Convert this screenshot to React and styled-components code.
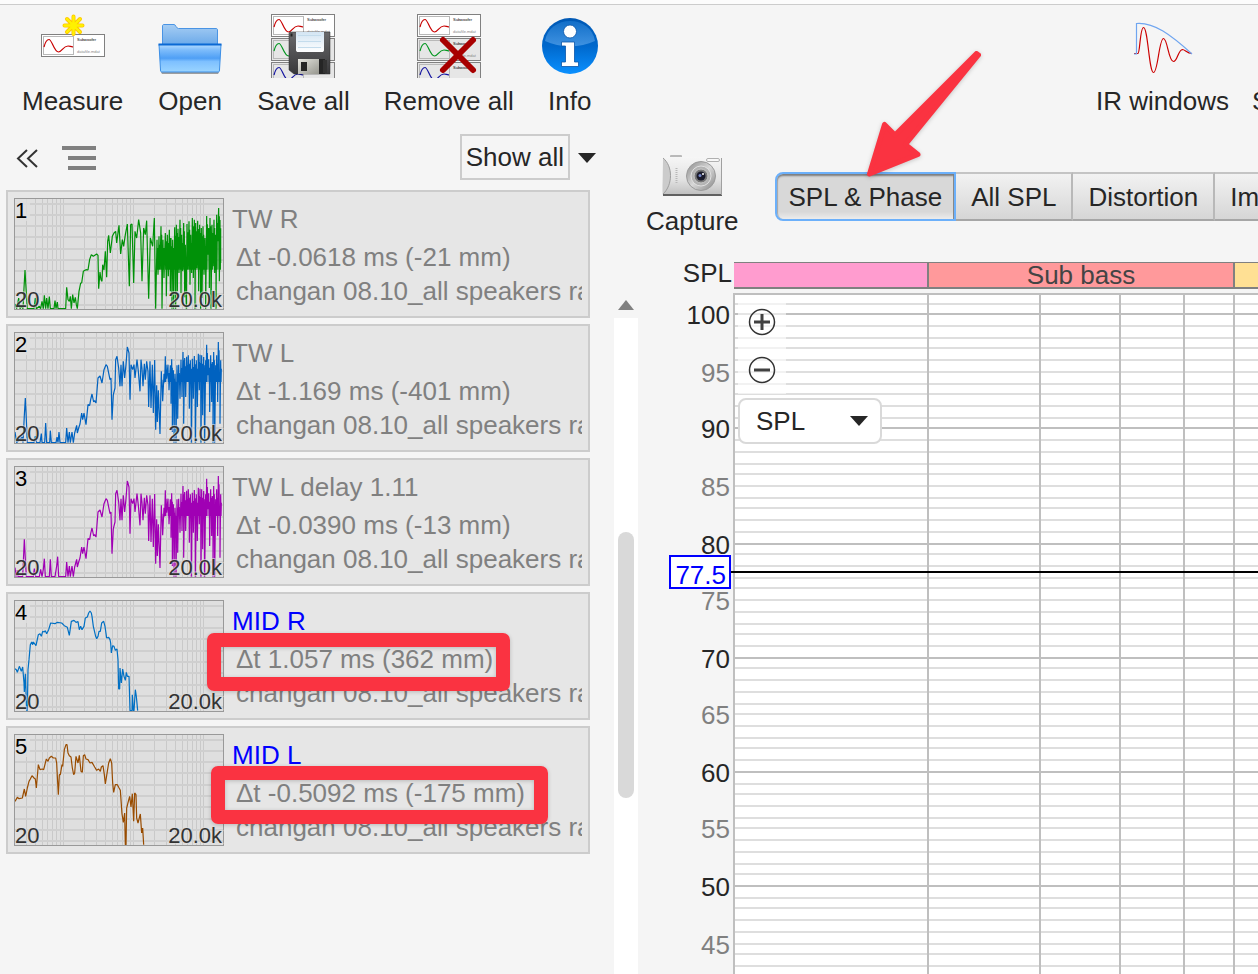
import React from "react"
import styled, { createGlobalStyle } from "styled-components"

const GlobalStyle = createGlobalStyle`
  * {
    box-sizing: border-box;
  }
  body {
    margin: 0;
    background: #f5f5f5;
    color: #262626;
    font-family: "Liberation Sans", Arial, sans-serif;
    font-size: 26px;
    line-height: 30px;
  }
  button, select {
    font: inherit;
    color: inherit;
    margin: 0;
    cursor: pointer;
  }
  svg {
    display: block;
  }
`

const Page = styled.div`
  display: flex;
  flex-direction: column;
  height: 100vh;
  overflow: hidden;
`

const TitleStrip = styled.div`
  flex: none;
  height: 5px;
  background: #fcfcfc;
  border-bottom: 1px solid #cccccc;
`

const Toolbar = styled.header`
  flex: none;
  display: flex;
  justify-content: space-between;
  padding: 9px 0 0 16px;
`

const ToolGroup = styled.div`
  display: flex;
  gap: 23px;
`

const MeasurementTools = styled(ToolGroup)`
  width: 168px;
  gap: 11px;
  overflow: hidden;
`

const ToolButton = styled.button`
  flex: none;
  display: flex;
  flex-direction: column;
  align-items: center;
  gap: 8px;
  padding: 0 ${props => props.$pad}px;
  border: 0;
  background: none;
  white-space: nowrap;
`

const Workspace = styled.div`
  flex: 1;
  min-height: 0;
  display: flex;
`

const Sidebar = styled.aside`
  flex: none;
  display: flex;
  width: 638px;
`

const ListColumn = styled.div`
  flex: 1;
  min-width: 0;
  padding: 18px 24px 0 6px;
`

const ListControls = styled.div`
  display: flex;
  align-items: center;
  height: 46px;
  margin: 0 -14px 10px 0;
`

const IconButton = styled.button`
  display: flex;
  padding: 2px ${props => props.$pad}px 0;
  border: 0;
  background: none;
`

const ShowAll = styled.button`
  height: 46px;
  margin-left: auto;
  padding: 0 4px;
  border: 2px solid #cccccc;
  background: #f5f5f5;
`

const List = styled.ul`
  display: flex;
  flex-direction: column;
  gap: 6px;
  margin: 0;
  padding: 0;
  list-style: none;
`

const Card = styled.li`
  position: relative;
  display: flex;
  gap: 8px;
  height: 128px;
  padding: 6px;
  border: 2px solid #cccccc;
  background: #e6e6e6;
  color: #808080;
`

const ThumbnailSvg = styled.svg`
  flex: none;
`

const CardText = styled.div`
  flex: 1;
  min-width: 0;
  padding-top: 6px;
  overflow: hidden;
  white-space: nowrap;
`

const CardTitle = styled.div`
  color: ${props => (props.$active ? "#0000ff" : "#808080")};
`

const CardDelay = styled.div`
  margin-top: 8px;
  padding-left: 4px;
`

const CardFile = styled.div`
  margin-top: 4px;
  padding-left: 4px;
`

const Marker = styled.div`
  position: absolute;
  left: ${props => props.$box.left}px;
  top: ${props => props.$box.top}px;
  width: ${props => props.$box.width}px;
  height: 58px;
  border: 14px solid #fa3341;
  border-radius: 7px;
  box-shadow: 0 1px 4px rgba(0, 0, 0, 0.2), inset 0 1px 4px rgba(0, 0, 0, 0.2);
  pointer-events: none;
`

const ScrollBar = styled.div`
  flex: none;
  display: flex;
  flex-direction: column;
  align-items: center;
  width: 24px;
  padding-top: 184px;
`

const ScrollTrack = styled.div`
  flex: 1;
  width: 24px;
  margin-top: 8px;
  padding: 214px 4px 0;
  background: #ffffff;
`

const ScrollThumb = styled.div`
  height: 266px;
  border-radius: 8px;
  background: #d9d9d9;
`

const GraphPane = styled.main`
  flex: 1;
  min-width: 0;
  display: flex;
  flex-direction: column;
`

const GraphHeader = styled.div`
  display: flex;
  gap: 30px;
  padding: 38px 0 0 2px;
`

const TabArea = styled.div`
  position: relative;
  flex: 1;
  min-width: 0;
  padding-top: 18px;
`

const Tabs = styled.div`
  display: flex;
  overflow: hidden;
`

const Tab = styled.button`
  flex: none;
  height: 49px;
  padding: 0 15px;
  border: 0;
  border-top: 2px solid #c4c4c4;
  border-bottom: 2px solid #a6a6a6;
  border-right: 2px solid #b8b8b8;
  background: linear-gradient(#f2f2f2, #d6d6d6);
  white-space: nowrap;

  &[aria-selected="true"] {
    padding: 0 12px;
    border: 2px solid #6cb0fa;
    border-radius: 8px 0 0 8px;
    background: linear-gradient(#d8d8d8 84%, #ececec);
    box-shadow: inset 0 3px 2px -1px #7d7d7d, inset 2px 0 1px -1px #aaaaaa,
      inset -1px 0 0 #8a8a8a;
  }
`

const Arrow = styled.svg`
  position: absolute;
  left: 85px;
  top: -109px;
  filter: drop-shadow(0 1px 2px rgba(0, 0, 0, 0.2));
  pointer-events: none;
`

const BandRow = styled.div`
  flex: none;
  display: flex;
  margin-top: 22px;
`

const AxisTitle = styled.div`
  width: 96px;
  padding-right: 2px;
  text-align: right;
`

const Bands = styled.div`
  flex: 1;
  min-width: 0;
  display: flex;
  height: 27px;
  margin-top: 4px;
  border-top: 1px solid #808080;
  border-bottom: 2px solid #808080;
`

const Band = styled.div`
  flex: ${props => (props.$width ? "none" : 1)};
  display: flex;
  align-items: center;
  justify-content: center;
  width: ${props => props.$width}px;
  border-right: 2px solid #808080;
  background: ${props => props.$color};
  color: #444444;

  &:last-child {
    border-right: 0;
  }
`

const Graph = styled.div`
  position: relative;
  flex: 1;
  min-height: 0;
  overflow: hidden;
`

const GraphControls = styled.div`
  position: absolute;
  left: 100px;
  top: 9px;
`

const ZoomButton = styled.button`
  display: flex;
  align-items: center;
  justify-content: center;
  width: 48px;
  height: 48px;
  padding: 0;
  border: 0;
  background: rgba(255, 255, 255, 0.6);
`

const SelectBox = styled.label`
  display: flex;
  align-items: center;
  margin-top: 4px;
  width: 144px;
  height: 46px;
  padding-right: 12px;
  border: 2px solid #d9d9d9;
  border-radius: 8px;
  background: #ffffff;

  select {
    flex: 1;
    min-width: 0;
    appearance: none;
    padding: 0 0 0 16px;
    border: 0;
    outline: 0;
    background: none;
  }
`

const WaveCard = ({ y, color, fill = "#fff" }) => (
  <g transform={`translate(0 ${y})`}>
    <rect x="0.5" y="0.5" width="63" height="22" fill={fill} stroke="#808080" />
    <rect x="2.5" y="2.5" width="30" height="18" fill={fill} stroke="#b8b8b8" />
    <path
      d="M3 13C4 9 6 5.500 8 5.500C11 5.500 13 18 17.500 18C21 18 22 12 27 12C29 12 30 13 32 12.800"
      fill="none"
      stroke={color}
      strokeWidth="1.2"
    />
    <text x="36" y="7" fontSize="4" fill="#000">
      Subwoofer
    </text>
    <text x="36" y="19" fontSize="4" fill="#888">
      datafile.mdat
    </text>
  </g>
)

const WaveStack = () => (
  <g>
    <WaveCard y={0} color="#c80000" />
    <WaveCard y={24} color="#00961e" fill="#e6e6e6" />
    <WaveCard y={48} color="#1414a0" fill="#e6e6e6" />
  </g>
)

const MeasureIcon = () => (
  <svg width="64" height="64" viewBox="0 0 64 64">
    <WaveCard y={20} color="#c80000" />
    <g strokeLinecap="round">
      <path
        d="M32.500 2.500V20M23.500 11.500H41.500M26 5L39 18M39 5L26 18"
        stroke="#ffc400"
        strokeWidth="4"
      />
      <path
        d="M32.500 2.500V20M23.500 11.500H41.500M26 5L39 18M39 5L26 18"
        stroke="#fff200"
        strokeWidth="2.4"
      />
    </g>
  </svg>
)

const OpenIcon = () => (
  <svg width="64" height="64" viewBox="0 0 64 64">
    <defs>
      <linearGradient id="folderBack" x1="0" y1="0" x2="0" y2="1">
        <stop offset="0" stopColor="#a6cdf3" />
        <stop offset="1" stopColor="#62a4e8" />
      </linearGradient>
      <linearGradient id="folderFront" x1="0" y1="0" x2="0" y2="1">
        <stop offset="0" stopColor="#b4dcff" />
        <stop offset="0.2" stopColor="#7dbcfb" />
        <stop offset="0.5" stopColor="#4f9ff5" />
        <stop offset="0.62" stopColor="#7ec0ff" />
        <stop offset="1" stopColor="#9ad4ff" />
      </linearGradient>
    </defs>
    <path d="M3 58H61L60 60H4Z" fill="#777" opacity="0.7" />
    <path
      d="M4.500 34V12C4.500 11 5 10.500 6 10.500H16C18 10.500 18 14.500 20.500 14.500H58C59 14.500 59.500 15 59.500 16V34Z"
      fill="url(#folderBack)"
      stroke="#4a94e4"
    />
    <path
      d="M1 30.500H63L61.500 56C61.500 57.500 61 58 60 58H4C3 58 2.500 57.500 2.500 56Z"
      fill="url(#folderFront)"
      stroke="#3c8fe6"
    />
    <path d="M0.500 30.500H63.500" stroke="#0b69d4" strokeWidth="2" />
  </svg>
)

const SaveIcon = () => (
  <svg width="64" height="64" viewBox="0 0 64 64">
    <defs>
      <linearGradient id="diskBody" x1="0" y1="0" x2="0" y2="1">
        <stop offset="0" stopColor="#6a6a6c" />
        <stop offset="1" stopColor="#38383a" />
      </linearGradient>
      <linearGradient id="diskLabel" x1="0" y1="0" x2="0" y2="1">
        <stop offset="0" stopColor="#d3e5f3" />
        <stop offset="1" stopColor="#ffffff" />
      </linearGradient>
      <linearGradient id="diskShutter" x1="0" y1="0" x2="1" y2="1">
        <stop offset="0" stopColor="#e6e6e0" />
        <stop offset="1" stopColor="#96968e" />
      </linearGradient>
    </defs>
    <WaveStack />
    <path d="M19 18H59V60H23L18 56V19Z" fill="url(#diskBody)" stroke="#2b2b2b" strokeWidth="0.5" />
    <rect x="19.500" y="19.500" width="2" height="3" fill="#222" />
    <path d="M25 18H53V36C53 37.500 52 38 51 38H27C26 38 25 37.500 25 36Z" fill="url(#diskLabel)" />
    <path d="M27 21.500H50M27 27.500H50M27 33.500H50" stroke="#c4dcec" />
    <rect x="27" y="45" width="27" height="15" fill="#252525" />
    <rect x="27" y="45" width="21" height="15" fill="url(#diskShutter)" />
    <rect x="30" y="48" width="6" height="9" fill="#252525" />
    <rect x="52" y="46" width="4" height="13" fill="#333" />
  </svg>
)

const RemoveIcon = () => (
  <svg width="64" height="64" viewBox="0 0 64 64">
    <WaveStack />
    <path
      d="M26 26L56 56M56 26L26 56"
      stroke="#a80000"
      strokeWidth="6"
      strokeLinecap="round"
    />
  </svg>
)

const InfoIcon = () => (
  <svg width="56" height="64" viewBox="0 0 56 64">
    <defs>
      <linearGradient id="infoBall" x1="0" y1="0" x2="0" y2="1">
        <stop offset="0" stopColor="#0058b4" />
        <stop offset="0.5" stopColor="#0068cc" />
        <stop offset="1" stopColor="#0a90ff" />
      </linearGradient>
      <linearGradient id="infoGloss" x1="0" y1="0" x2="0" y2="1">
        <stop offset="0" stopColor="#1b78d0" />
        <stop offset="1" stopColor="#5aa4ea" />
      </linearGradient>
    </defs>
    <circle cx="28" cy="32" r="28" fill="url(#infoBall)" />
    <path d="M3 27C5 14 16 7 28 7S51 14 53 27C38 34 18 34 3 27Z" fill="url(#infoGloss)" opacity="0.7" />
    <g fill="#fff" stroke="#0a55a8" strokeWidth="0.8">
      <circle cx="28" cy="17.500" r="6.500" />
      <path d="M19.500 28H32.500V48H36.500V52.500H19.500V48H23.500V32H19.500Z" />
    </g>
  </svg>
)

const IrIcon = () => (
  <svg width="64" height="64" viewBox="0 0 64 64">
    <path
      d="M4 39.500H8C10 39 10 13.500 13.500 13.500C18 13.500 19 58.500 23.500 58.500C28 58.500 29 24.500 33.500 24.500C37.500 24.500 38.500 47.500 43.500 47.500C47.500 47.500 48 36 52.500 35.500C55 35.500 57 39.500 62 39.500"
      fill="none"
      stroke="#cc0000"
      strokeWidth="1.2"
    />
    <path
      d="M4 40H6.500V9.500C24 8 41 21 62 40"
      fill="none"
      stroke="#6fa5f0"
      strokeWidth="1.2"
    />
  </svg>
)

const CameraIcon = () => (
  <svg width="60" height="44" viewBox="0 0 60 44">
    <defs>
      <linearGradient id="camBody" x1="0" y1="0" x2="0" y2="1">
        <stop offset="0" stopColor="#f6f6f6" />
        <stop offset="0.6" stopColor="#e2e2e2" />
        <stop offset="1" stopColor="#bebebe" />
      </linearGradient>
      <linearGradient id="camRing" x1="0" y1="0" x2="1" y2="1">
        <stop offset="0" stopColor="#8a8a8a" />
        <stop offset="0.5" stopColor="#d8d8d8" />
        <stop offset="1" stopColor="#858585" />
      </linearGradient>
    </defs>
    <rect x="8" y="1" width="12" height="3" rx="1" fill="#b9b9b9" />
    <path d="M1 3H60V41H1C0 40 0 4 1 3Z" fill="url(#camBody)" />
    <path d="M1 4C11 12 11 31 1 40Z" fill="#cbcbcb" />
    <path d="M1 4C11 12 11 31 1 40" fill="none" stroke="#9c9c9c" />
    <path d="M1 41H60" stroke="#606060" strokeWidth="2" />
    <path d="M59.500 4V41" stroke="#a0a0a0" />
    <rect x="44.500" y="4.500" width="13" height="3" rx="1.5" fill="#f8f8f8" stroke="#b0b0b0" />
    <path d="M14.500 14V30" stroke="#b8b8b8" strokeWidth="2" strokeDasharray="1 1" />
    <circle cx="39" cy="22" r="14.500" fill="url(#camRing)" stroke="#9b9b9b" />
    <circle cx="39" cy="22" r="10" fill="#b3b3b3" stroke="#e0e0e0" />
    <circle cx="39" cy="22" r="7" fill="#777" stroke="#c8c8c8" />
    <circle cx="39" cy="22" r="4.500" fill="#1b1c2c" />
    <circle cx="38" cy="21.500" r="1.500" fill="#7788cc" />
    <circle cx="41" cy="20" r="1" fill="#fff" />
  </svg>
)

const DownTriangle = () => (
  <svg width="18" height="10" viewBox="0 0 18 10">
    <path d="M0 0H18L9 10Z" fill="#262626" />
  </svg>
)

// Frequency responses, traced on a 630 x 336 grid (20 Hz to 20 kHz)
const twRight =
  "3,318 8,332 14,300 18,332 23,325 27,332 30,270 33,216 36,270 40,332 60,332 64,300 67,332 76,325 80,332 84,310 88,332 91,292 95,332 98,300 102,332 106,296 109,332 120,332 123,308 126,332 130,312 132,332 155,332 158,268 162,305 166,310 169,295 172,332 176,290 180,315 184,298 187,320 190,332 195,280 200,255 203,255 208,220 216,215 222,216 227,184 232,170 238,175 248,168 252,172 254,272 258,222 261,245 264,250 266,200 270,216 274,160 278,238 281,130 284,112 289,165 295,115 300,105 305,100 308,135 315,82 320,168 325,125 329,145 334,110 340,78 346,265 350,80 354,78 359,255 363,100 368,120 374,65 380,105 384,250 389,90 394,110 398,68 404,302 409,120 416,145 421,60 425,332 429,125 432,230 435,115 438,215 441,85 444,332 447,125 450,240 454,105 457,295 460,110 463,235 466,95 469,280 471,120 474,332 476,125 479,332 482,88 485,332 487,80 490,280 492,92 495,225 498,65 501,285 503,110 506,220 509,75 512,298 514,140 517,332 519,78 522,215 525,70 528,260 530,110 533,225 535,60 538,240 541,65 543,332 545,75 548,210 551,68 554,280 557,80 560,332 562,90 564,300 567,85 570,230 573,120 575,332 578,54 581,170 584,90 586,270 588,60 591,332 594,80 597,205 600,65 602,225 604,110 606,332 608,50 611,130 614,30 616,250 618,66 620,195"

const twLeft =
  "155,332 158,288 162,332 166,300 169,332 174,300 178,332 182,303 188,280 190,303 194,288 198,276 203,243 206,263 210,243 216,278 222,218 227,220 230,203 234,186 239,210 242,206 246,213 252,138 258,132 264,153 270,113 276,98 280,103 288,143 291,138 294,263 298,188 303,168 305,83 309,73 314,108 318,163 321,98 324,163 328,88 332,138 336,98 340,45 345,63 348,203 351,98 356,113 360,98 363,138 369,83 373,118 378,178 381,83 384,110 387,163 391,95 394,143 398,88 402,118 404,225 408,88 411,228 415,98 418,243 422,84 425,293 428,160 430,270 433,175 438,306 442,118 446,208 450,125 454,73 458,140 462,98 465,175 469,100 471,215 473,82 475,300 478,115 480,332 483,125 486,332 489,100 491,260 494,98 498,200 501,83 504,195 507,60 509,275 512,78 515,195 518,74 521,150 523,70 526,230 529,85 532,332 535,80 538,200 541,72 544,332 547,85 550,225 553,65 556,175 558,68 561,332 563,70 566,250 569,75 572,332 575,85 578,38 581,130 584,82 587,240 590,70 593,210 595,90 597,332 599,60 602,332 605,100 608,70 611,210 613,30 616,120 618,275 620,85"

const floorA = "3,300 8,332 24,315 27,332 31,250 34,198 36,240 40,332 60,332 64,312 68,332 78,332 82,305 84,332 92,332 95,273 98,332 107,332 109,296 112,332 126,332 129,315 132,332 135,300 138,332 "
const floorB = "3,305 6,332 10,312 12,332 26,332 31,220 34,280 37,332 58,332 61,308 65,332 76,332 80,310 84,332 88,310 91,278 94,332 106,332 109,280 112,332 123,332 128,300 131,272 134,332 "

const midRight =
  "3,206 7,209 10,217 16,199 22,214 26,201 30,249 31,276 34,221 37,309 38,331 40,331 42,209 45,179 49,134 53,126 56,134 58,126 66,137 73,104 78,101 82,109 86,94 91,96 94,92 98,101 104,89 110,69 123,71 130,67 143,69 151,77 160,82 166,106 172,64 180,61 186,67 192,65 196,89 200,79 204,89 210,79 214,54 220,51 224,39 228,33 232,39 234,49 238,79 245,109 248,116 252,109 255,94 259,94 263,69 269,64 273,79 278,114 284,112 288,119 290,129 292,159 296,137 300,139 304,151 309,147 312,179 314,267 317,267 318,204 322,249 326,207 330,229 334,241 337,217 340,229 345,229 348,332 354,332 355,284 358,332 360,332 364,269 367,289 371,332"

const midLeft =
  "3,202 10,190 15,194 25,192 31,165 35,187 40,162 45,142 49,135 54,125 60,132 64,135 67,162 73,92 78,107 85,105 89,107 97,75 102,82 106,72 112,67 118,72 125,72 128,87 130,127 133,182 136,122 139,122 144,92 146,97 151,47 156,32 159,32 162,57 166,65 171,69 175,102 179,122 182,117 186,67 192,87 196,64 201,112 205,115 208,65 212,62 216,75 222,77 228,87 234,85 242,99 248,109 254,105 259,112 262,99 267,95 271,122 274,150 280,112 284,87 289,74 293,87 296,147 299,175 304,152 310,152 314,160 319,169 324,240 328,265 332,237 334,332 336,332 338,222 343,202 347,187 351,219 355,179 359,262 362,177 366,182 368,252 372,267 379,240 383,297 386,282 389,332"

// the tweeter traces comb heavily above 2 kHz, so every peak there gets a second dip
const addCombing = (points, depth) =>
  points
    .split(" ")
    .map(point => {
      const [x, y] = point.split(",").map(Number)
      return x > 425 && y < 130 ? `${point} ${x + 1},${depth} ${x + 2},${y + 25}` : point
    })
    .join(" ")

const measurements = [
  { name: "TW R", delay: "Δt -0.0618 ms (-21 mm)", color: "#009108", points: addCombing(twRight, 215) },
  { name: "TW L", delay: "Δt -1.169 ms (-401 mm)", color: "#0062c0", points: floorA + addCombing(twLeft, 150) },
  { name: "TW L delay 1.11", delay: "Δt -0.0390 ms (-13 mm)", color: "#a000b4", points: floorB + addCombing(twLeft, 150) },
  {
    name: "MID R",
    delay: "Δt 1.057 ms (362 mm)",
    color: "#0070c4",
    points: midRight,
    active: true,
    marker: { left: 199, top: 39, width: 303 }
  },
  {
    name: "MID L",
    delay: "Δt -0.5092 ms (-175 mm)",
    color: "#994c00",
    points: midLeft,
    active: true,
    marker: { left: 203, top: 38, width: 337 }
  }
]

const gridFreqs = [10, 100, 1000, 10000]
  .flatMap(decade => [1, 2, 3, 4, 5, 6, 7, 8, 9].map(n => n * decade))
  .filter(f => f > 20 && f < 20000)
const freqToX = f => Math.round(Math.log10(f / 20) * 70)
const gridRows = [6, 17, 28, 39, 51, 62, 73, 85, 96, 107]

const Thumbnail = ({ index, color, points }) => (
  <ThumbnailSvg width="210" height="112" viewBox="0 0 210 112">
    <rect width="210" height="112" fill="#dfdfdf" />
    <g stroke="#c9c9c9">
      {gridFreqs.map(f => (
        <line key={f} x1={freqToX(f) + 0.5} x2={freqToX(f) + 0.5} y1="1" y2="111" />
      ))}
      {gridRows.map(y => (
        <line key={y} x1="1" x2="209" y1={y} y2={y} strokeWidth="2" stroke="#cfcfcf" />
      ))}
    </g>
    <rect x="1" y="1" width="15" height="22" fill="#dfdfdf" opacity="0.8" />
    <g transform="scale(0.33333)">
      <polyline points={points} fill="none" stroke={color} strokeWidth="3.6" strokeLinejoin="bevel" />
    </g>
    <rect x="0.5" y="0.5" width="209" height="111" fill="none" stroke="#999999" />
    <g fontSize="22" fill="#333" stroke="#dfdfdf" strokeOpacity="0.6" strokeWidth="2" paintOrder="stroke">
      <text x="1" y="20" fill="#000">{index}</text>
      <text x="1" y="109">20</text>
      <text x="208" y="109" textAnchor="end">20.0k</text>
    </g>
  </ThumbnailSvg>
)

const MeasurementCard = ({ index, item }) => (
  <Card>
    <Thumbnail index={index} color={item.color} points={item.points} />
    <CardText>
      <CardTitle $active={item.active}>{item.name}</CardTitle>
      <CardDelay>{item.delay}</CardDelay>
      <CardFile>changan 08.10_all speakers raw</CardFile>
    </CardText>
    {item.marker && <Marker $box={item.marker} />}
  </Card>
)

// the plot starts 289px down the window and snaps to a 2px raster
const dbToY = db => 2 * Math.round(157.3 + (100 - db) * 5.715) - 289
const levels = Array.from({ length: 59 }, (_, i) => 101 - i)
const freqLines = [290, 402, 482, 546, 596]

const SplGraph = () => (
  <svg width="100%" height="100%">
    <rect x="96" y="5" width="100%" height="100%" fill="#fff" />
    {levels.map(db => (
      <line
        key={db}
        x1="96"
        x2="100%"
        y1={dbToY(db)}
        y2={dbToY(db)}
        stroke={db % 10 ? "#dedede" : "#bfbfbf"}
        strokeWidth="2"
      />
    ))}
    {freqLines.map(x => (
      <line key={x} x1={x} x2={x} y1="5" y2="100%" stroke="#bfbfbf" strokeWidth="2" />
    ))}
    <line x1="96" x2="96" y1="4" y2="100%" stroke="#bfbfbf" strokeWidth="2" />
    <line x1="95" x2="100%" y1="5" y2="5" stroke="#bfbfbf" strokeWidth="2" />
    {levels.filter(db => db % 5 === 0).map(db => (
      <text
        key={db}
        x="92"
        y={dbToY(db) + 10}
        fontSize="26"
        textAnchor="end"
        fill={db % 10 ? "#808080" : "#262626"}
      >
        {db}
      </text>
    ))}
    <line x1="92" x2="100%" y1="283" y2="283" stroke="#000" strokeWidth="2" />
    <rect x="32" y="267" width="60" height="32" fill="#fff" stroke="#0000ff" strokeWidth="2" />
    <text x="88" y="295" fontSize="26" textAnchor="end" fill="#0000ff">
      77.5
    </text>
  </svg>
)

const ZoomIcon = ({ plus }) => (
  <svg width="28" height="28" viewBox="0 0 28 28">
    <circle cx="14" cy="14" r="12.500" fill="none" stroke="#333" strokeWidth="1.5" />
    <path d={plus ? "M6 14H22M14 6V22" : "M6 14H22"} stroke="#404040" strokeWidth="3" />
  </svg>
)

const App = () => (
  <Page>
    <GlobalStyle />
    <TitleStrip />
    <Toolbar>
      <ToolGroup>
        <ToolButton $pad={6}><MeasureIcon />Measure</ToolButton>
        <ToolButton $pad={6}><OpenIcon />Open</ToolButton>
        <ToolButton $pad={6}><SaveIcon />Save all</ToolButton>
        <ToolButton $pad={5}><RemoveIcon />Remove all</ToolButton>
        <ToolButton $pad={0}><InfoIcon />Info</ToolButton>
      </ToolGroup>
      <MeasurementTools>
        <ToolButton $pad={6}><IrIcon />IR windows</ToolButton>
        <ToolButton $pad={6}><IrIcon />SPL meter</ToolButton>
      </MeasurementTools>
    </Toolbar>
    <Workspace>
      <Sidebar>
        <ListColumn>
          <ListControls>
            <IconButton $pad={10} aria-label="Collapse panel">
              <svg width="24" height="20" viewBox="0 0 24 20">
                <path
                  d="M11 2L2 10.500L11 19M21 2L12 10.500L21 19"
                  fill="none"
                  stroke="#333"
                  strokeWidth="2"
                />
              </svg>
            </IconButton>
            <IconButton $pad={12} aria-label="Menu">
              <svg width="34" height="24" viewBox="0 0 34 24">
                <path d="M0 2H34M6 12H34M6 22H34" stroke="#808080" strokeWidth="4" />
              </svg>
            </IconButton>
            <ShowAll>Show all</ShowAll>
            <IconButton $pad={8} aria-label="Choose what to show">
              <DownTriangle />
            </IconButton>
          </ListControls>
          <List>
            {measurements.map((item, i) => (
              <MeasurementCard key={item.name} index={i + 1} item={item} />
            ))}
          </List>
        </ListColumn>
        <ScrollBar>
          <svg width="16" height="10" viewBox="0 0 16 10">
            <path d="M0 10H16L8 0Z" fill="#808080" />
          </svg>
          <ScrollTrack>
            <ScrollThumb />
          </ScrollTrack>
        </ScrollBar>
      </Sidebar>
      <GraphPane>
        <GraphHeader>
          <ToolButton $pad={6}><CameraIcon />Capture</ToolButton>
          <TabArea>
            <Tabs role="tablist">
              <Tab role="tab" aria-selected="true">SPL &amp; Phase</Tab>
              <Tab role="tab">All SPL</Tab>
              <Tab role="tab">Distortion</Tab>
              <Tab role="tab">Impulse</Tab>
            </Tabs>
            <Arrow width="130" height="140" viewBox="860 45 130 140">
              <path
                d="M976.500 53.500L895 135L884.500 124.500L869.500 174L918 154.500L905.500 144.500L978.500 55Z"
                fill="#fa3341"
                stroke="#fa3341"
                strokeWidth="5"
                strokeLinejoin="round"
              />
            </Arrow>
          </TabArea>
        </GraphHeader>
        <BandRow>
          <AxisTitle>SPL</AxisTitle>
          <Bands>
            <Band $width={195} $color="#ff9ccf" />
            <Band $width={306} $color="#ff999b">Sub bass</Band>
            <Band $color="#ffe094" />
          </Bands>
        </BandRow>
        <Graph>
          <SplGraph />
          <GraphControls>
            <ZoomButton aria-label="Zoom in"><ZoomIcon plus /></ZoomButton>
            <ZoomButton aria-label="Zoom out"><ZoomIcon /></ZoomButton>
            <SelectBox>
              <select aria-label="Trace" defaultValue="SPL">
                <option>SPL</option>
                <option>Phase</option>
              </select>
              <DownTriangle />
            </SelectBox>
          </GraphControls>
        </Graph>
      </GraphPane>
    </Workspace>
  </Page>
)

export default App
